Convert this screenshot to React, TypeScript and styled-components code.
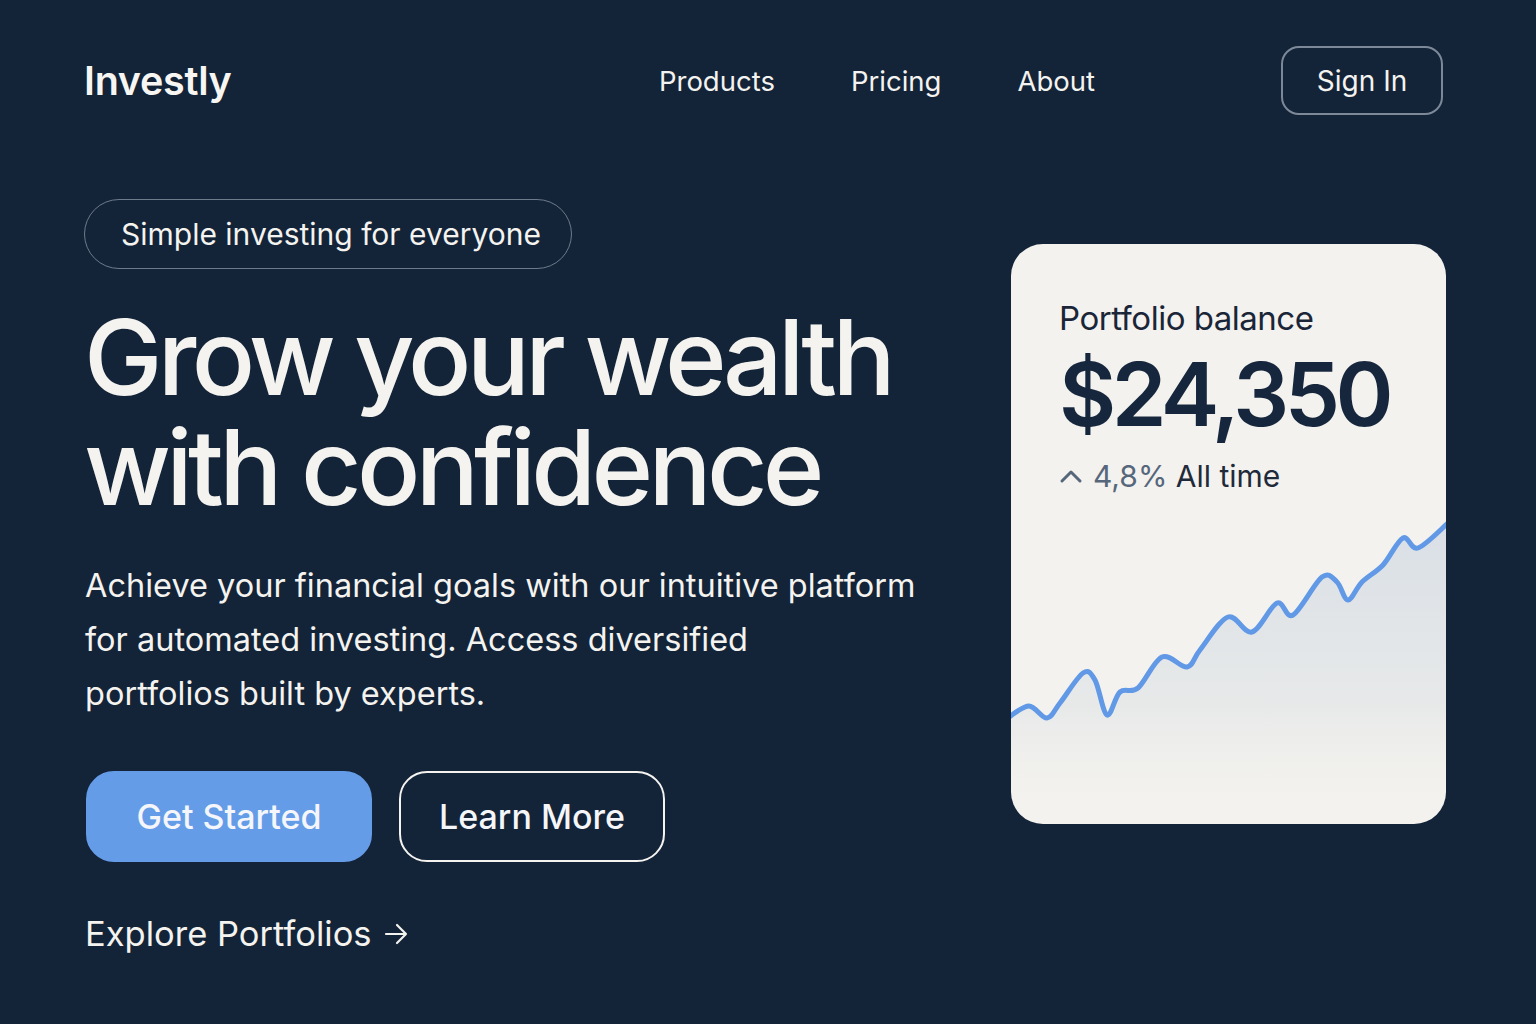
import React from "react";
import styled, { createGlobalStyle } from "styled-components";

const GlobalStyle = createGlobalStyle`
  * { box-sizing: border-box; }
  html, body { margin: 0; padding: 0; background: #132338; }
  body { font-family: Inter, "Noto Sans", "Liberation Sans", sans-serif; color: #f4f3ef; }
`;

const Page = styled.div`
  width: 1536px;
  height: 1024px;
  background: #132338;
  padding: 46px 90px 0 84px;
  overflow: hidden;
`;

const Header = styled.header`
  display: flex;
  align-items: center;
  height: 69px;
`;

const Logo = styled.div`
  font-size: 39.5px;
  font-weight: 600;
  letter-spacing: -0.3px;
  color: #f7f6f2;
`;

const Nav = styled.nav`
  display: flex;
  gap: 76px;
  margin-left: auto;
  margin-right: 186px;
`;

const NavLink = styled.a`
  font-size: 27.5px;
  font-weight: 400;
  color: #f4f3ef;
  text-decoration: none;
`;

const SignIn = styled.button`
  width: 162px;
  height: 69px;
  margin-right: 3px;
  border: 2px solid #7d8998;
  border-radius: 18px;
  background: transparent;
  color: #f4f3ef;
  font-family: inherit;
  font-size: 28px;
  font-weight: 400;
`;

const Hero = styled.main`
  display: flex;
  justify-content: space-between;
  align-items: flex-start;
  margin-top: 84px;
`;

const Left = styled.section`
  display: flex;
  flex-direction: column;
  align-items: flex-start;
`;

const Pill = styled.div`
  height: 70px;
  padding: 0 30px 0 36px;
  display: flex;
  align-items: center;
  border: 1.5px solid #6e7b8a;
  border-radius: 35px;
  font-size: 30px;
  color: #f4f3ef;
`;

const Headline = styled.h1`
  margin: 33px 0 0 0;
  font-size: 105px;
  line-height: 110px;
  font-weight: 500;
  letter-spacing: -4.7px;
  color: #f4f3ef;
`;

const Lead = styled.p`
  margin: 37px 0 0 1px;
  font-size: 32.5px;
  line-height: 54px;
  font-weight: 400;
  color: #f4f3ef;
`;

const Actions = styled.div`
  display: flex;
  gap: 27px;
  margin: 50px 0 0 2px;
`;

const Button = styled.button<{ $primary?: boolean }>`
  height: 91px;
  width: ${(p) => (p.$primary ? "286px" : "266px")};
  border-radius: 28px;
  border: 2px solid ${(p) => (p.$primary ? "#659ce8" : "#f4f3ef")};
  background: ${(p) => (p.$primary ? "#659ce8" : "transparent")};
  color: #f4f6fa;
  font-family: inherit;
  font-size: 34px;
  font-weight: 500;
`;

const Explore = styled.a`
  margin: 50px 0 0 1px;
  font-size: 34.5px;
  line-height: 44px;
  color: #f4f3ef;
  text-decoration: none;
  display: flex;
  align-items: center;
  gap: 12px;
`;

const Card = styled.aside`
  margin-top: 45px;
  width: 435px;
  height: 580px;
  background: #f3f2ee;
  border-radius: 32px;
  overflow: hidden;
  display: flex;
  flex-direction: column;
`;

const CardBody = styled.div`
  padding: 54px 0 0 48px;
`;

const CardTitle = styled.div`
  font-size: 33px;
  line-height: 40px;
  font-weight: 400;
  letter-spacing: -0.5px;
  color: #1a2638;
`;

const Balance = styled.div`
  margin-top: 8px;
  font-size: 88px;
  line-height: 96px;
  font-weight: 600;
  letter-spacing: -4.5px;
  color: #16263d;
`;

const Change = styled.div`
  margin-top: 16px;
  display: flex;
  align-items: center;
  gap: 10px;
  font-size: 30px;
  line-height: 36px;
  color: #1f2a3a;
`;

const Pct = styled.span`
  color: #56677c;
`;

const Chart = styled.svg`
  display: block;
  margin-top: auto;
  width: 435px;
  height: 310px;
`;

const pts: [number, number][] = [
  [-2, 203], [18, 192], [36, 204], [49, 189], [72, 159], [84, 166], [96, 201],
  [109, 178], [127, 174], [151, 143], [176, 153], [189, 136], [217, 103],
  [241, 118], [266, 89], [282, 101], [311, 63], [326, 68], [337, 86],
  [351, 68], [372, 51], [392, 24], [407, 34], [437, 9],
];

function smoothPath(p: [number, number][]) {
  let d = `M ${p[0][0]} ${p[0][1]}`;
  for (let i = 0; i < p.length - 1; i++) {
    const p0 = p[i - 1] || p[i];
    const p1 = p[i];
    const p2 = p[i + 1];
    const p3 = p[i + 2] || p2;
    const c1x = p1[0] + (p2[0] - p0[0]) / 6;
    const c1y = p1[1] + (p2[1] - p0[1]) / 6;
    const c2x = p2[0] - (p3[0] - p1[0]) / 6;
    const c2y = p2[1] - (p3[1] - p1[1]) / 6;
    d += ` C ${c1x} ${c1y}, ${c2x} ${c2y}, ${p2[0]} ${p2[1]}`;
  }
  return d;
}

const line = smoothPath(pts);
const area = `${line} L 437 312 L -2 312 Z`;

export default function App() {
  return (
    <>
      <GlobalStyle />
      <Page>
        <Header>
          <Logo>Investly</Logo>
          <Nav>
            <NavLink>Products</NavLink>
            <NavLink>Pricing</NavLink>
            <NavLink>About</NavLink>
          </Nav>
          <SignIn>Sign In</SignIn>
        </Header>
        <Hero>
          <Left>
            <Pill>Simple investing for everyone</Pill>
            <Headline>
              Grow your wealth
              <br />
              with confidence
            </Headline>
            <Lead>
              Achieve your financial goals with our intuitive platform
              <br />
              for automated investing. Access diversified
              <br />
              portfolios built by experts.
            </Lead>
            <Actions>
              <Button $primary>Get Started</Button>
              <Button>Learn More</Button>
            </Actions>
            <Explore>
              Explore Portfolios
              <svg width="24" height="24" viewBox="0 0 24 24" fill="none" stroke="#f4f3ef" strokeWidth="2.2" strokeLinecap="round" strokeLinejoin="round">
                <path d="M2 12 H22 M13 3 L22 12 L13 21" />
              </svg>
            </Explore>
          </Left>
          <Card>
            <CardBody>
              <CardTitle>Portfolio balance</CardTitle>
              <Balance>$24,350</Balance>
              <Change>
                <svg width="24" height="16" viewBox="0 0 24 16" fill="none" stroke="#56677c" strokeWidth="3" strokeLinecap="round" strokeLinejoin="round">
                  <path d="M3 13 L12 4 L21 13" />
                </svg>
                <span>
                  <Pct>4,8%</Pct> All time
                </span>
              </Change>
            </CardBody>
            <Chart viewBox="0 0 435 310" preserveAspectRatio="none">
              <defs>
                <linearGradient id="fillGrad" x1="0" y1="0" x2="0" y2="1">
                  <stop offset="0%" stopColor="#d6dde5" stopOpacity="0.9" />
                  <stop offset="60%" stopColor="#dfe3e6" stopOpacity="0.6" />
                  <stop offset="100%" stopColor="#f3f2ee" stopOpacity="0" />
                </linearGradient>
              </defs>
              <path d={area} fill="url(#fillGrad)" />
              <path d={line} fill="none" stroke="#6199e6" strokeWidth="5" strokeLinecap="round" strokeLinejoin="round" />
            </Chart>
          </Card>
        </Hero>
      </Page>
    </>
  );
}
